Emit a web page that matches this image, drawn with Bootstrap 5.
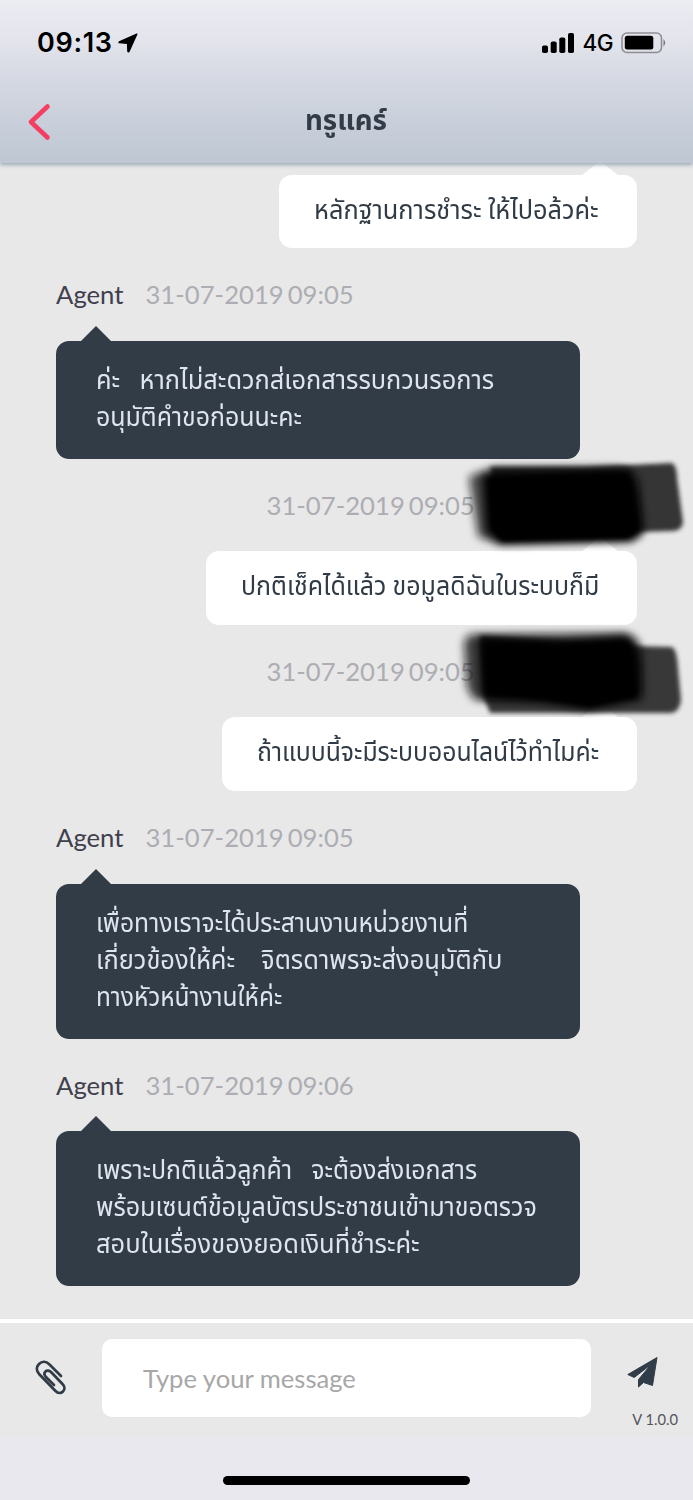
<!DOCTYPE html>
<html lang="th">
<head>
<meta charset="utf-8">
<meta name="viewport" content="width=device-width, initial-scale=1">
<title>ทรูแคร์</title>
<link href="https://cdn.jsdelivr.net/npm/bootstrap@5.3.0/dist/css/bootstrap.min.css" rel="stylesheet">
<style>
  body { background:#e8e8e8; color:#303b46; font-family:Lato,"Noto Sans Thai","Noto Sans Thai UI",Loma,Garuda,"DejaVu Sans",sans-serif; height:1500px; overflow:hidden; }
  .topbar { height:163px; background:linear-gradient(#ecedf3 0,#e3e4ec 40px,#d3d7e1 85px,#bec7d3 100%); box-shadow:0 2px 4px #9aa9b6; z-index:2; }
  .statusbar { height:84px; padding:2px 27px 0 37px; color:#000; font-family:Inter,sans-serif; }
  .clock { font-size:27px; font-weight:600; letter-spacing:.65px; }
  .net { font-size:22.5px; font-weight:500; letter-spacing:-.6px; margin-left:9px; }
  .titlebar { height:79px; padding-left:27px; }
  .chat-title { left:0; right:2px; top:17px; font-size:28px; line-height:37px; font-weight:700; color:#323c49; }
  .thread { height:1156px; padding:11.5px 56px 0; }
  .meta { height:92.65px; font-size:25.7px; line-height:92px; color:#403f4d; }
  .meta time { color:#adadb3; word-spacing:-2.6px; }
  .agent time { margin-left:22px; }
  .mine time { margin-left:210.5px; }
  .bubble { border-radius:13px; position:relative; font-size:26px; line-height:37px; }
  .bubble::before { content:""; position:absolute; top:-15px; border:solid transparent; border-width:0 15px 15px; }
  .dark { width:523.5px; background:#313c46; color:#dfe5ee; padding:20px 40px 24px; }
  .dark::before { left:25px; border-bottom-color:#313c46; }
  .lite { background:#fff; color:#303b46; padding:16px 38px 20.5px 35.5px; }
  .lite::before { right:19px; top:-14px; border-width:0 18px 14px; border-bottom-color:#fff; }
  .ln { display:block; height:37px; white-space:pre; }
  .fit { display:inline-block; transform-origin:0 50%; white-space:pre; }
  .scrawl { position:absolute; z-index:1; }
  .composer { height:118px; border-top:4px solid #fff; padding:16px 15px 0 35px; }
  .msgbox { width:489px; height:78px; border:0; border-radius:10px; padding:0 41px; font-size:25.6px; margin-left:36px; background:#fff; }
  .msgbox::placeholder { color:#a7a7a7; opacity:1; }
  .ver { font-size:14.7px; line-height:18px; color:#55545e; }
  .homearea { height:63px; background:#e8e8ee; padding-top:39px; }
  .homebar { width:247px; height:9px; background:#000; }
</style>
</head>
<body>
<header class="topbar position-relative">
  <div class="statusbar d-flex align-items-center">
    <span class="clock">09:13</span>
    <svg class="ms-1" width="22" height="22" viewBox="0 0 22 22"><path d="M19.500 1.500 2 9.200Q.5 11.100 2.200 11.300L9.900 12.100 10.200 19.500Q11 21.500 12.600 19.700L20.400 2.600Q20.700 1 19.500 1.500Z"/></svg>
    <svg class="ms-auto" width="32" height="20" viewBox="0 0 32 20"><rect y="12.500" width="6" height="7.500" rx="1.800"/><rect x="8.700" y="8.500" width="6" height="11.500" rx="1.800"/><rect x="17.300" y="4.500" width="6" height="15.500" rx="1.800"/><rect x="26" width="6" height="20" rx="1.800"/></svg>
    <span class="net">4G</span>
    <svg class="ms-2" width="45" height="22" viewBox="0 0 45 22"><rect x="1" y="1" width="39.500" height="19.500" rx="5" fill="none" stroke="#8e8e94" stroke-width="1.600"/><rect x="3.800" y="3.800" width="28.500" height="13.800" rx="2.500"/><path d="M42.500 7q3.500 3.800 0 7.500z" fill="#77777d"/></svg>
  </div>
  <div class="titlebar position-relative">
    <svg width="24" height="40" viewBox="0 0 24 40" style="margin-top:18px"><path d="M20.500 4.500 4 20 20.500 35.500" fill="none" stroke="#f63d63" stroke-width="4.600" stroke-linecap="round" stroke-linejoin="round"/></svg>
    <h1 class="chat-title position-absolute m-0 text-center"><span class="fit" data-w="82">ทรูแคร์</span></h1>
  </div>
</header>

<main class="thread d-flex flex-column position-relative">
  <div class="bubble lite align-self-end"><span class="ln"><span class="fit" data-w="285">หลักฐานการชำระ ให้ไปอล้วค่ะ</span></span></div>

  <div class="meta agent">Agent<time>31-07-2019 09:05</time></div>
  <div class="bubble dark">
    <span class="ln"><span class="fit" data-w="398">ค่ะ   หากไม่สะดวกส่เอกสารรบกวนรอการ</span></span>
    <span class="ln"><span class="fit" data-w="206">อนุมัติคำขอก่อนนะคะ</span></span>
  </div>

  <div class="meta mine position-relative"><time>31-07-2019 09:05</time>
    <svg class="scrawl" style="left:404px;top:-4px" width="230" height="98" viewBox="460 455 230 98">
      <defs>
        <filter id="soft" x="-10%" y="-10%" width="120%" height="120%"><feGaussianBlur stdDeviation="2.200"/></filter>
        <filter id="softer" x="-10%" y="-15%" width="120%" height="130%"><feGaussianBlur stdDeviation="4"/></filter>
      </defs>
      <g><path filter="url(#soft)" d="M490 467 586 467 672 463Q677 466 677 478L683 522Q682 531 672 531L640 532 560 532 500 520Z" fill="#222" opacity=".9"/><path filter="url(#softer)" d="M469 478Q470 474 482 472L494 467 620 467 638 478 642 534 630 541 500 544 478 537Z" fill="#111" opacity=".72"/><path filter="url(#softer)" d="M482 474 630 470Q640 490 642 532L632 540 500 543 486 532Z" fill="#000"/><path filter="url(#soft)" d="M490 478 628 474 638 530 628 538 502 541 492 528Z"/></g>
    </svg>
  </div>
  <div class="bubble lite align-self-end"><span class="ln"><span class="fit" data-w="358">ปกติเช็คได้แล้ว ขอมูลดิฉันในระบบก็มี</span></span></div>

  <div class="meta mine position-relative"><time>31-07-2019 09:05</time>
    <svg class="scrawl" style="left:399px;top:-1px" width="235" height="96" viewBox="455 624 235 96">
      <g><path filter="url(#soft)" d="M480 636 636 646 672 647Q677 650 678 668L681 700Q679 713 670 713L490 713 484 698Z" fill="#282828" opacity=".9"/><path filter="url(#softer)" d="M464 645Q464 634 476 634L625 633Q638 635 641 650L642 698 474 700 467 688Z" fill="#111" opacity=".78"/><path filter="url(#softer)" d="M479 638 560 641 625 636Q638 644 640 668L640 699 590 710 540 702 482 698Z" fill="#000"/><path filter="url(#soft)" d="M488 644 560 647 628 642 636 696 590 706 540 698 490 694Z"/></g>
    </svg>
  </div>
  <div class="bubble lite align-self-end"><span class="ln"><span class="fit" data-w="342">ถ้าแบบนี้จะมีระบบออนไลน์ไว้ทำไมค่ะ</span></span></div>

  <div class="meta agent">Agent<time>31-07-2019 09:05</time></div>
  <div class="bubble dark">
    <span class="ln"><span class="fit" data-w="372">เพื่อทางเราจะได้ประสานงานหน่วยงานที่</span></span>
    <span class="ln"><span class="fit" data-w="406">เกี่ยวข้องให้ค่ะ    จิตรดาพรจะส่งอนุมัติกับ</span></span>
    <span class="ln"><span class="fit" data-w="186">ทางหัวหน้างานให้ค่ะ</span></span>
  </div>

  <div class="meta agent">Agent<time>31-07-2019 09:06</time></div>
  <div class="bubble dark">
    <span class="ln"><span class="fit" data-w="381">เพราะปกติแล้วลูกค้า   จะต้องส่งเอกสาร</span></span>
    <span class="ln"><span class="fit" data-w="441">พร้อมเซนต์ข้อมูลบัตรประชาชนเข้ามาขอตรวจ</span></span>
    <span class="ln"><span class="fit" data-w="324">สอบในเรื่องของยอดเงินที่ชำระค่ะ</span></span>
  </div>
</main>

<footer>
  <div class="composer d-flex align-items-start">
    <svg style="margin-top:21px" width="31" height="35" viewBox="0 0 31 35" fill="none" stroke="#303b46" stroke-width="2.700" stroke-linecap="round"><path d="M26 16 14.500 4.500C11 1.200 7 1 4 4S1.200 11 4.500 14.500L20.500 31C23 33.500 26 33.500 28 31.500S30 26.500 27.500 24L16.500 12.500C14.500 10.500 12.200 9.800 10.500 11.500S9.200 15.200 11.200 17.200L19 25"/></svg>
    <input class="msgbox" type="text" placeholder="Type your message">
    <div class="ms-auto d-flex flex-column align-items-end">
      <svg style="margin:18px 20px 0 0" width="31" height="31" viewBox="0 0 31 31" fill="#303d49"><path d="M30 .5 .8 17.500 7.200 20.500 24 7.500 11.500 22.500 11.500 30 16.500 25.500 25.500 28.500Z" stroke="#303d49" stroke-width="1" stroke-linejoin="round"/></svg>
      <span class="ver" style="margin-top:22px">V 1.0.0</span>
    </div>
  </div>
  <div class="homearea"><div class="homebar rounded-pill mx-auto"></div></div>
</footer>
<script src="https://cdn.jsdelivr.net/npm/bootstrap@5.3.0/dist/js/bootstrap.bundle.min.js"></script>
<script>
  // Give every message line its measure: condense or widen the run to data-w.
  document.querySelectorAll('.fit').forEach(function (el) {
    var natural = el.offsetWidth, w = +el.dataset.w;
    el.style.width = w + 'px';
    el.style.transform = 'scaleX(' + (w / natural) + ')';
  });
</script>
</body>
</html>
